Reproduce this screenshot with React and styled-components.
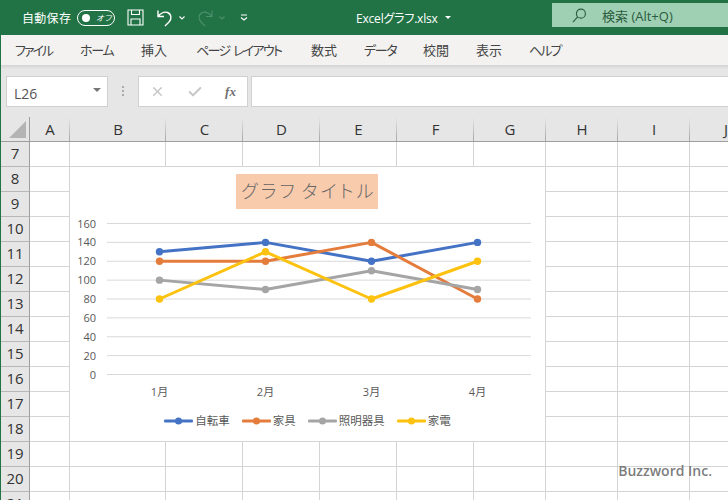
import React from 'react';
import styled, { createGlobalStyle } from 'styled-components';
import { X, Check } from 'lucide-react';

const COLUMNS = [
  { label: 'A', width: 40 },
  { label: 'B', width: 96 },
  { label: 'C', width: 77 },
  { label: 'D', width: 77 },
  { label: 'E', width: 77 },
  { label: 'F', width: 77 },
  { label: 'G', width: 72 },
  { label: 'H', width: 72 },
  { label: 'I', width: 72 },
  { label: 'J', width: 72 },
];
const ROWS = [7, 8, 9, 10, 11, 12, 13, 14, 15, 16, 17, 18, 19, 20, 21];
const TABS = [
  { label: 'ファイル', slot: 65, tracking: -2 },
  { label: 'ホーム', slot: 61, tracking: -1.3 },
  { label: '挿入', slot: 55, tracking: 0 },
  { label: 'ページ レイアウト', slot: 115, tracking: -1.7 },
  { label: '数式', slot: 53, tracking: 0 },
  { label: 'データ', slot: 59, tracking: -1.3 },
  { label: '校閲', slot: 53, tracking: 0 },
  { label: '表示', slot: 53, tracking: 0 },
  { label: 'ヘルプ', slot: 59, tracking: -1.9 },
];

const TICKS = [0, 20, 40, 60, 80, 100, 120, 140, 160];
const MONTHS = ['1月', '2月', '3月', '4月'];
const MONTH_X = [159.5, 265.5, 371.5, 477.5];
const SERIES = [
  { name: '自転車', color: '#4472c4', values: [130, 140, 120, 140] },
  { name: '家具', color: '#e47c3c', values: [120, 120, 140, 80] },
  { name: '照明器具', color: '#a5a5a5', values: [100, 90, 110, 90] },
  { name: '家電', color: '#fcc20f', values: [80, 130, 80, 120] },
];
const valueY = value => 374.5 - value * 0.94375;

const GlobalStyle = createGlobalStyle`
  html, body {
    margin: 0;
    padding: 0;
    overflow: hidden;
    background: #fff;
  }
`;

const App = () => (
  <>
    <GlobalStyle />
    <Window>
      <TitleBar>
        <AutoSave>自動保存</AutoSave>
        <Toggle>
          <ToggleDot />
          <ToggleText>オフ</ToggleText>
        </Toggle>
        <SaveIcon viewBox="0 0 17 17">
          <path d="M1 1h15v15H1zM4.5 1v4.5h8V1M4 16v-6h9v6" />
        </SaveIcon>
        <UndoIcon viewBox="0 0 18 18">
          <path d="M2 1.500v6h6M2 7.500C5 4 8.500 2.500 11.500 3.500c4 1.500 4.500 6.500 1.500 9.500l-4 4" />
        </UndoIcon>
        <Chevron viewBox="0 0 6 4">
          <path d="M.5.5 3 3 5.500.5" />
        </Chevron>
        <RedoIcon viewBox="0 0 18 18">
          <path d="M16 1.500v6h-6M16 7.500C13 4 9.500 2.500 6.500 3.500c-4 1.500-4.500 6.500-1.500 9.500l4 4" />
        </RedoIcon>
        <DimChevron viewBox="0 0 6 4">
          <path d="M.5.5 3 3 5.500.5" />
        </DimChevron>
        <CustomizeIcon viewBox="0 0 8 7">
          <path d="M1 1h6M1 3.500 4 6l3-2.500" />
        </CustomizeIcon>
        <FileName>Excelグラフ.xlsx</FileName>
        <FileCaret />
        <SearchBox>
          <SearchIcon viewBox="0 0 16 16">
            <circle cx="9.500" cy="6" r="4.800" />
            <path d="M6 9.500 1 15" />
          </SearchIcon>
          <SearchText>検索 (Alt+Q)</SearchText>
        </SearchBox>
      </TitleBar>

      <RibbonTabs>
        {TABS.map(tab => (
          <Tab key={tab.label} $slot={tab.slot} $tracking={tab.tracking}>
            {tab.label}
          </Tab>
        ))}
      </RibbonTabs>

      <FormulaBar>
        <NameBox>
          L26
          <NameCaret />
        </NameBox>
        <Grip />
        <FormulaButtons>
          <FormulaButton>
            <X size={15} strokeWidth={2.4} />
          </FormulaButton>
          <FormulaButton>
            <Check size={16} strokeWidth={3} />
          </FormulaButton>
          <FxButton>fx</FxButton>
        </FormulaButtons>
        <FormulaInput />
      </FormulaBar>

      <Sheet>
        <SheetGrid>
          <Corner>
            <CornerMark />
          </Corner>
          {COLUMNS.map(column => (
            <ColumnHeader key={column.label}>{column.label}</ColumnHeader>
          ))}
          {ROWS.map(row => (
            <React.Fragment key={row}>
              <RowHeader>{row}</RowHeader>
              {COLUMNS.map(column => (
                <Cell key={column.label} />
              ))}
            </React.Fragment>
          ))}
        </SheetGrid>

        <Chart>
          <ChartTitle>グラフ タイトル</ChartTitle>
          <Plot viewBox="70 215 475 190">
            {TICKS.map(tick => (
              <React.Fragment key={tick}>
                <GridLine x1="107" x2="531" y1={valueY(tick)} y2={valueY(tick)} />
                <AxisText x="96" y={valueY(tick) + 4} textAnchor="end">
                  {tick}
                </AxisText>
              </React.Fragment>
            ))}
            {MONTHS.map((month, i) => (
              <AxisText key={month} x={MONTH_X[i]} y="396" textAnchor="middle">
                {month}
              </AxisText>
            ))}
            {SERIES.map(series => (
              <g key={series.name}>
                <SeriesLine
                  stroke={series.color}
                  points={series.values.map((v, i) => `${MONTH_X[i]},${valueY(v)}`).join(' ')}
                />
                {series.values.map((v, i) => (
                  <circle key={i} cx={MONTH_X[i]} cy={valueY(v)} r="3.700" fill={series.color} />
                ))}
              </g>
            ))}
          </Plot>
          <Legend>
            {SERIES.map(series => (
              <LegendItem key={series.name}>
                <LegendKey viewBox="0 0 29 8">
                  <rect x="0" y="2.500" width="29" height="3" rx="1" fill={series.color} />
                  <circle cx="14.500" cy="4" r="3.500" fill={series.color} />
                </LegendKey>
                {series.name}
              </LegendItem>
            ))}
          </Legend>
        </Chart>
      </Sheet>

      <Watermark>Buzzword Inc.</Watermark>
    </Window>
  </>
);

export default App;

const UI_FONT = `"Open Sans", "Noto Sans CJK JP", sans-serif`;

const Window = styled.div`
  position: relative;
  width: 728px;
  height: 500px;
  box-sizing: border-box;
  border-left: 1px solid #217346;
  overflow: hidden;
  display: flex;
  flex-direction: column;
  font-family: ${UI_FONT};
`;

const TitleBar = styled.div`
  flex: none;
  height: 35px;
  margin-left: -1px;
  display: flex;
  align-items: center;
  padding-left: 22px;
  background: #217346;
  color: #fff;
`;

const AutoSave = styled.span`
  font-size: 12px;
  font-feature-settings: 'palt';
  letter-spacing: 0.3px;
  width: 55px;
`;

const Toggle = styled.div`
  box-sizing: border-box;
  width: 38px;
  height: 16px;
  border: 1.2px solid #fff;
  border-radius: 8px;
  display: flex;
  align-items: center;
  padding-left: 4px;
`;

const ToggleDot = styled.span`
  width: 8px;
  height: 8px;
  border-radius: 50%;
  background: #fff;
`;

const ToggleText = styled.span`
  margin-left: 6px;
  font-size: 8px;
  font-style: italic;
  line-height: 1;
`;

const StrokeIcon = styled.svg`
  flex: none;
  fill: none;
  stroke: #fff;
  stroke-width: 1.1;
`;

const SaveIcon = styled(StrokeIcon)`
  width: 17px;
  height: 17px;
  margin-left: 12px;
`;

const UndoIcon = styled(StrokeIcon)`
  width: 18px;
  height: 18px;
  margin-left: 12px;
  stroke-width: 1.4;
`;

const Chevron = styled(StrokeIcon)`
  width: 6px;
  height: 4px;
  margin-left: 5px;
`;

const RedoIcon = styled(UndoIcon)`
  margin-left: 11px;
  stroke: #4c8f6c;
  stroke-width: 1.1;
`;

const DimChevron = styled(Chevron)`
  stroke: #4c8f6c;
`;

const CustomizeIcon = styled(StrokeIcon)`
  width: 8px;
  height: 7px;
  margin-left: 15px;
`;

const FileName = styled.span`
  margin-left: 108px;
  font-size: 12px;
  letter-spacing: -0.2px;
  font-feature-settings: 'palt';
  white-space: nowrap;
`;

const FileCaret = styled.span`
  margin-left: 7px;
  border-top: 3px solid #fff;
  border-left: 3px solid transparent;
  border-right: 3px solid transparent;
`;

const SearchBox = styled.div`
  box-sizing: border-box;
  margin-left: auto;
  width: 176px;
  height: 24px;
  margin-top: -5px;
  display: flex;
  align-items: center;
  padding-left: 20px;
  background: #9fd0b3;
  color: #2b5b40;
`;

const SearchIcon = styled.svg`
  width: 15px;
  height: 15px;
  fill: none;
  stroke: #2b5b40;
  stroke-width: 1.2;
`;

const SearchText = styled.span`
  margin-left: 15px;
  font-size: 13px;
  white-space: nowrap;
`;

const RibbonTabs = styled.div`
  flex: none;
  box-sizing: border-box;
  height: 30px;
  display: flex;
  align-items: center;
  padding: 0 0 2px 14px;
  background: #f3f2f1;
`;

const Tab = styled.span`
  flex: none;
  width: ${props => props.$slot}px;
  font-size: 13px;
  font-feature-settings: 'palt';
  letter-spacing: ${props => props.$tracking}px;
  word-spacing: 2px;
  color: #444;
  white-space: nowrap;
`;

const FormulaBar = styled.div`
  flex: none;
  box-sizing: border-box;
  height: 52px;
  display: flex;
  padding: 11px 0 10px 5px;
  background: linear-gradient(#d4d4d4, #e6e6e6 4px);
`;

const FieldBox = styled.div`
  box-sizing: border-box;
  height: 31px;
  background: #fff;
  border: 1px solid #d0d0d0;
`;

const NameBox = styled(FieldBox)`
  position: relative;
  width: 102px;
  padding-left: 7px;
  font-size: 14px;
  line-height: 33px;
  color: #555;
`;

const NameCaret = styled.span`
  position: absolute;
  right: 6px;
  top: 11px;
  border-top: 4px solid #777;
  border-left: 4px solid transparent;
  border-right: 4px solid transparent;
`;

const Grip = styled.span`
  width: 2px;
  height: 10px;
  margin: 10px 14px 0 14px;
  background: repeating-linear-gradient(#aaa 0 2px, transparent 2px 4px);
`;

const FormulaButtons = styled(FieldBox)`
  width: 110px;
  display: flex;
  align-items: center;
  justify-content: space-around;
  margin-left: 0;
`;

const FormulaButton = styled.span`
  display: flex;
  color: #c6c6c6;
`;

const FxButton = styled.span`
  font-family: "Liberation Serif", serif;
  font-style: italic;
  font-weight: bold;
  font-size: 13px;
  color: #707070;
`;

const FormulaInput = styled(FieldBox)`
  flex: 1;
  margin-left: 3px;
  border-right: none;
`;

const Sheet = styled.div`
  position: relative;
  flex: 1;
  overflow: hidden;
  background: #fff;
`;

const SheetGrid = styled.div`
  display: grid;
  grid-template-columns: 29px ${COLUMNS.map(column => `${column.width}px`).join(' ')};
  grid-auto-rows: 25px;
`;

const HeaderCell = styled.div`
  box-sizing: border-box;
  display: flex;
  align-items: center;
  justify-content: center;
  background: #e6e6e6;
  color: #333;
  font-size: 15px;
`;

const Corner = styled(HeaderCell)`
  align-items: flex-end;
  justify-content: flex-end;
  padding: 0 3px 3px 0;
  border-right: 1px solid #9e9e9e;
  border-bottom: 1px solid #9e9e9e;
`;

const CornerMark = styled.span`
  width: 17px;
  height: 17px;
  background: #b4b4b4;
  clip-path: polygon(100% 0, 100% 100%, 0 100%);
`;

const ColumnHeader = styled(HeaderCell)`
  padding-bottom: 1px;
  border-bottom: 1px solid #9e9e9e;
  background-image: linear-gradient(#e6e6e6, #a6a6a6);
  background-size: 1px 100%;
  background-position: right top;
  background-repeat: no-repeat;
`;

const RowHeader = styled(HeaderCell)`
  padding-bottom: 2px;
  border-right: 1px solid #9e9e9e;
  border-bottom: 1px solid #b8b8b8;
`;

const Cell = styled.div`
  box-sizing: border-box;
  border-right: 1px solid #d4d4d4;
  border-bottom: 1px solid #d4d4d4;
`;

const Chart = styled.div`
  position: absolute;
  left: 69px;
  top: 50px;
  width: 475px;
  height: 274px;
  display: flex;
  flex-direction: column;
  align-items: center;
  background: #fff;
`;

const ChartTitle = styled.div`
  box-sizing: border-box;
  flex: none;
  width: 142px;
  height: 35px;
  margin-top: 7px;
  margin-left: -1px;
  padding-left: 4px;
  background: #f8cbad;
  color: #666;
  font-size: 18px;
  font-weight: 300;
  line-height: 34px;
  text-align: center;
  white-space: nowrap;
  letter-spacing: 3.2px;
  word-spacing: -4px;
  font-feature-settings: 'palt';
`;

const Plot = styled.svg`
  flex: none;
  width: 475px;
  height: 190px;
  margin-top: 6px;
`;

const GridLine = styled.line`
  stroke: #d9d9d9;
  stroke-width: 1;
`;

const AxisText = styled.text`
  font-family: ${UI_FONT};
  font-size: 11px;
  fill: #595959;
`;

const SeriesLine = styled.polyline`
  fill: none;
  stroke-width: 3;
  stroke-linejoin: round;
`;

const Legend = styled.div`
  flex: none;
  display: flex;
  justify-content: center;
  gap: 12px;
  margin-top: 7px;
`;

const LegendItem = styled.span`
  display: flex;
  align-items: center;
  gap: 2px;
  font-size: 11.5px;
  line-height: 18px;
  color: #595959;
`;

const LegendKey = styled.svg`
  width: 29px;
  height: 8px;
`;

const Watermark = styled.div`
  position: absolute;
  right: 16px;
  bottom: 20px;
  font-size: 14px;
  font-weight: 600;
  color: rgba(100, 100, 100, 0.85);
`;
